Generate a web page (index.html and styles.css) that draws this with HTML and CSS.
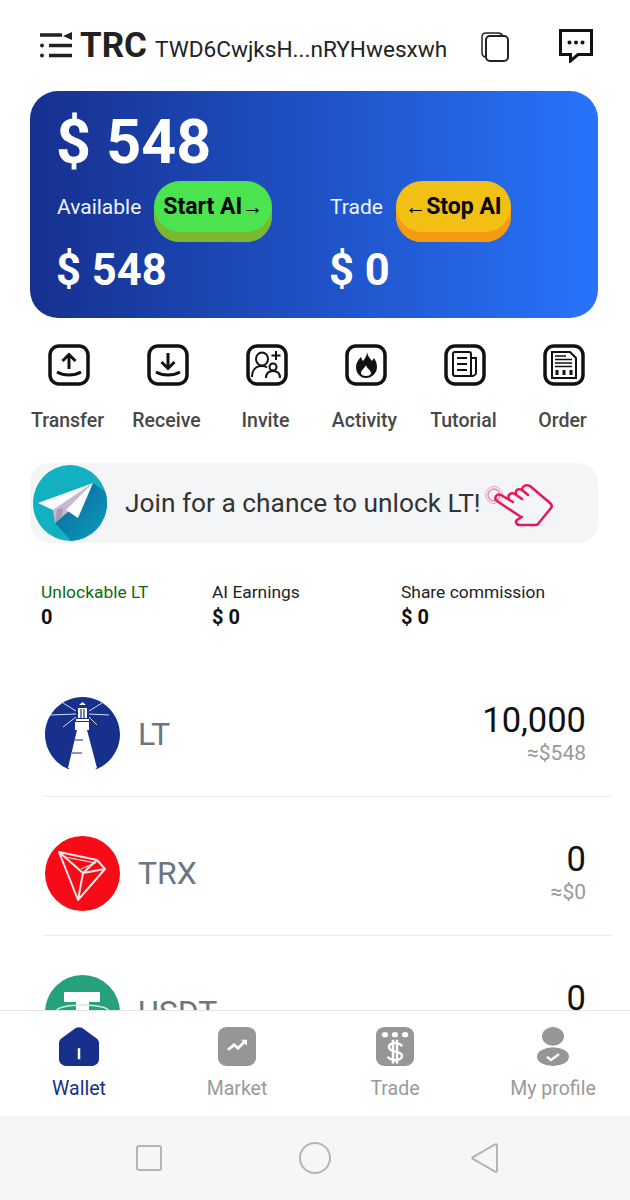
FILE: index.html
```html
<!DOCTYPE html>
<html lang="en">

<head>
    <meta charset="UTF-8">
    <meta name="viewport" content="width=device-width, initial-scale=1.0">
    <title>Wallet</title>
    <link rel="stylesheet" href="styles.css">
</head>

<body>
    <div class="app">
        <div class="scroll">
            <div class="header">
                <svg class="menuIcon" viewBox="0 0 32 26">
                    <path d="M0 3h22M9 13.500h23M9 23.500h23" stroke="#222" stroke-width="3.500" fill="none" />
                    <circle cx="2" cy="13.500" r="2" fill="#222" />
                    <circle cx="2" cy="23.500" r="2" fill="#222" />
                    <path d="M32 0v8l-9-4z" fill="#222" />
                </svg>
                <span class="logoText">TRC</span>
                <span class="address">TWD6CwjksH...nRYHwesxwh</span>
                <svg class="copyIcon" viewBox="0 0 28 30">
                    <rect x="5" y="4" width="22" height="25" rx="4" fill="#fff" stroke="#222" stroke-width="2" />
                    <path d="M4.500 25C2 24.500 1 23 1 21V5c0-2.500 1.500-4 4-4h12c2.500 0 4 1 5 3" fill="none" stroke="#222" stroke-width="1.500" />
                </svg>
                <svg class="msgIcon" viewBox="0 0 34 34">
                    <path d="M1.500 1.500h31v24H19l-7.500 6.500v-6.500h-10z" fill="none" stroke="#111" stroke-width="3" />
                    <circle cx="10.500" cy="13.500" r="2" fill="#111" />
                    <circle cx="17" cy="13.500" r="2" fill="#111" />
                    <circle cx="23.500" cy="13.500" r="2" fill="#111" />
                </svg>
            </div>

            <div class="balance">
                <div class="total">$ 548</div>
                <div class="balanceCols">
                    <div class="balanceCol">
                        <div class="colTop">
                            <span class="colLabel">Available</span>
                            <div class="aiBtn btnStart">Start AI<span class="arrow">→</span></div>
                        </div>
                        <div class="colValue">$ 548</div>
                    </div>
                    <div class="balanceCol">
                        <div class="colTop">
                            <span class="colLabel">Trade</span>
                            <div class="aiBtn btnStop"><span class="arrow">←</span>Stop AI</div>
                        </div>
                        <div class="colValue">$ 0</div>
                    </div>
                </div>
            </div>

            <div class="actions">
                <div class="action">
                    <svg class="actionIcon" viewBox="0 0 42 42">
                        <rect x="2" y="2" width="38" height="38" rx="9" fill="none" stroke="#111" stroke-width="3.500" />
                        <path d="M21 25V11M14.500 17L21 10.500 27.500 17M9 28c7 4 17 4 24 0" fill="none" stroke="#111" stroke-width="3" />
                    </svg>
                    <span>Transfer</span>
                </div>
                <div class="action">
                    <svg class="actionIcon" viewBox="0 0 42 42">
                        <rect x="2" y="2" width="38" height="38" rx="9" fill="none" stroke="#111" stroke-width="3.500" />
                        <path d="M21 9v15M14.500 18L21 24.500 27.500 18M9 28c7 4 17 4 24 0" fill="none" stroke="#111" stroke-width="3" />
                    </svg>
                    <span>Receive</span>
                </div>
                <div class="action">
                    <svg class="actionIcon" viewBox="0 0 42 42">
                        <rect x="2" y="2" width="38" height="38" rx="9" fill="none" stroke="#111" stroke-width="3.500" />
                        <ellipse cx="16" cy="15" rx="6" ry="6.500" fill="none" stroke="#111" stroke-width="2" />
                        <path d="M6 33c0-7 4-11 10-11 2 0 4 .5 5 1.500" fill="none" stroke="#111" stroke-width="2" />
                        <circle cx="27" cy="23" r="3.500" fill="none" stroke="#111" stroke-width="2" />
                        <path d="M20 34c0-5 3-7 7-7s7 2 7 7M30 7v9M25.500 11.500h9" fill="none" stroke="#111" stroke-width="2" />
                    </svg>
                    <span>Invite</span>
                </div>
                <div class="action">
                    <svg class="actionIcon" viewBox="0 0 42 42">
                        <rect x="2" y="2" width="38" height="38" rx="9" fill="none" stroke="#111" stroke-width="3.500" />
                        <path d="M22 8c1 5 3 6 5 9l2-3c2 3 3 6 3 9 0 6-5 11-11 11s-10-5-10-11c0-4 2-7 5-10 1 2 1 3 2 4 2-3 4-5 4-9z" fill="#111" />
                        <path d="M21 21c0 3 5 5 5 8 0 2-2 3-5 3s-5-1-5-3c0-3 4-5 5-8z" fill="#fff" />
                    </svg>
                    <span>Activity</span>
                </div>
                <div class="action">
                    <svg class="actionIcon" viewBox="0 0 42 42">
                        <rect x="2" y="2" width="38" height="38" rx="9" fill="none" stroke="#111" stroke-width="3.500" />
                        <path d="M27 32H11a2 2 0 0 1-2-2V10a2 2 0 0 1 2-2h14a2 2 0 0 1 2 2v22c2 0 5-1 5-3V14h-5" fill="none" stroke="#111" stroke-width="2" />
                        <path d="M13 14h10M13 20h10M13 26h10" stroke="#111" stroke-width="2" />
                    </svg>
                    <span>Tutorial</span>
                </div>
                <div class="action">
                    <svg class="actionIcon" viewBox="0 0 42 42">
                        <rect x="2" y="2" width="38" height="38" rx="9" fill="none" stroke="#111" stroke-width="3.500" />
                        <path d="M9 8h18l6 6v20H9z" fill="none" stroke="#111" stroke-width="2" />
                        <path d="M12 12h11M12 15.500h17M12 19h17M12 22.500h17" stroke="#111" stroke-width="1.500" />
                        <path d="M14 26v5M21 26v5M28 26v5" stroke="#111" stroke-width="3" />
                    </svg>
                    <span>Order</span>
                </div>
            </div>

            <div class="banner">
                <svg class="plane" viewBox="0 0 74 76">
                    <defs>
                        <clipPath id="planeClip">
                            <ellipse cx="37" cy="38" rx="37" ry="38" />
                        </clipPath>
                        <linearGradient id="planeShadow" x1="0.200" y1="0.200" x2="0.900" y2="0.900">
                            <stop offset="0" stop-color="#0a6f9f" />
                            <stop offset="1" stop-color="#0b9fbe" />
                        </linearGradient>
                    </defs>
                    <ellipse cx="37" cy="38" rx="37" ry="38" fill="#12b0c0" />
                    <path d="M60 18L22 58l22 24 36-24 0-26z" fill="url(#planeShadow)" clip-path="url(#planeClip)" />
                    <path d="M60 18L20 45 22 58 35 47z" fill="#c9b8cf" />
                    <path d="M60 18L5 38l15 7z" fill="#fff" />
                    <path d="M60 18L33 45l12 8z" fill="#fff" />
                    <path d="M22 58l2-14 6-1-1 8z" fill="#a99bb5" />
                </svg>
                <span class="bannerText">Join for a chance to unlock LT!</span>
                <svg class="hand" viewBox="0 0 80 60">
                    <circle cx="15" cy="20" r="8.500" fill="none" stroke="#f0a0b8" stroke-width="1" />
                    <circle cx="15" cy="20" r="6" fill="none" stroke="#ef8aa8" stroke-width="1.500" />
                    <path d="M42 42L18 26C14 23 18 18 22 20L34 27M30 24C28 20 32 17 36 19L43 24M37 19C36 15 39 13 43 15L49 20M43 15C43 11 47 9 51 11L71 28C73 30 73 32 72 33L59 49C58 50 57 50 56 50L41 50C37 50 36 46 38 45C39 44 41 43 43 42" fill="none" stroke="#e8185c" stroke-width="2.500" stroke-linejoin="round" stroke-linecap="round" />
                </svg>
            </div>

            <div class="stats">
                <div class="stat statFirst">
                    <div class="statLabel statGreen">Unlockable LT</div>
                    <div class="statValue">0</div>
                </div>
                <div class="stat">
                    <div class="statLabel">AI Earnings</div>
                    <div class="statValue">$ 0</div>
                </div>
                <div class="stat">
                    <div class="statLabel">Share commission</div>
                    <div class="statValue">$ 0</div>
                </div>
            </div>

            <div class="coins">
                <div class="coin">
                    <svg class="coinIcon" viewBox="0 0 75 75">
                        <path d="M23 72C9 66 0 52 0 37.500 0 17 17 0 37.500 0S75 17 75 37.500C75 52 66 66 52 72l-4-2H27z" fill="#16308c" />
                        <path d="M33 11h9v10h-9zM34 8h7l-3.500-3zM30 25h14v8H30zM32 33h10l10 38H23z" fill="#fff" />
                        <path d="M31 22h13v2H31z" fill="#fff" />
                        <path d="M31 14L18 6M31 17L5 18M31 20L18 30M44 14L57 6M44 17l20 1M44 20l8 8" stroke="#d5dcf3" stroke-width="1" />
                        <path d="M36 12v9M39 12v9M30 43h8M27 56h10" stroke="#16308c" stroke-width="1.200" />
                    </svg>
                    <span class="coinName">LT</span>
                    <div class="coinRight">
                        <div class="coinAmount">10,000</div>
                        <div class="coinUsd">≈$548</div>
                    </div>
                </div>
                <div class="coin">
                    <svg class="coinIcon" viewBox="0 0 75 75">
                        <circle cx="37.500" cy="37.500" r="37.500" fill="#f70b16" />
                        <path d="M14 16L52 24 60 33 33 64zM14 16L38 37 33 64M38 37L60 33M38 37L52 24" fill="none" stroke="#f7e6e6" stroke-width="2" stroke-linejoin="round" />
                        <path d="M20 21L50 27 36 33" fill="none" stroke="#f7e6e6" stroke-width="1.200" />
                    </svg>
                    <span class="coinName">TRX</span>
                    <div class="coinRight">
                        <div class="coinAmount">0</div>
                        <div class="coinUsd">≈$0</div>
                    </div>
                </div>
                <div class="coin">
                    <svg class="coinIcon" viewBox="0 0 75 75">
                        <circle cx="37.500" cy="37.500" r="37.500" fill="#26a17b" />
                        <path d="M19 17h36v10H44v35H31V27H19z" fill="#fff" />
                        <ellipse cx="37.500" cy="36" rx="26" ry="6" fill="none" stroke="#cfeee2" stroke-width="1.500" />
                    </svg>
                    <span class="coinName">USDT</span>
                    <div class="coinRight">
                        <div class="coinAmount">0</div>
                        <div class="coinUsd">≈$0</div>
                    </div>
                </div>
            </div>
        </div>

        <div class="tabbar">
            <div class="tab tabActive">
                <svg class="tabIcon" viewBox="0 0 40 46" preserveAspectRatio="none">
                    <path d="M17 1c2-1 4-1 6 0l15 13c1 1 2 3 2 5v19c0 4-3 8-8 8H8c-5 0-8-4-8-8V19c0-2 1-4 2-5z" fill="#16308c" />
                    <path d="M20 25v13" stroke="#fff" stroke-width="2.500" />
                </svg>
                <span>Wallet</span>
            </div>
            <div class="tab">
                <svg class="tabIcon" viewBox="0 0 40 46" preserveAspectRatio="none">
                    <rect x="1" y="0" width="38" height="46" rx="9" fill="#969696" />
                    <path d="M11 27l6-6 4 4 6-7" fill="none" stroke="#fff" stroke-width="3" />
                    <path d="M24 15h6v7z" fill="#fff" />
                </svg>
                <span>Market</span>
            </div>
            <div class="tab">
                <svg class="tabIcon" viewBox="0 0 40 46" preserveAspectRatio="none">
                    <rect x="1" y="0" width="38" height="46" rx="9" fill="#969696" />
                    <circle cx="10" cy="9" r="3.200" fill="#fff" />
                    <circle cx="20" cy="9" r="3.200" fill="#fff" />
                    <circle cx="30" cy="9" r="3.200" fill="#fff" />
                    <path d="M27 23c-1-3-4-4-7-4s-6 1-6 5 4 4 6 5 7 1 7 5-3 5-7 5-6-1-7-4M18 15v28M22 15v28" fill="none" stroke="#fff" stroke-width="2.500" />
                </svg>
                <span>Trade</span>
            </div>
            <div class="tab">
                <svg class="tabIcon" viewBox="0 0 40 46" preserveAspectRatio="none">
                    <ellipse cx="20" cy="11" rx="11" ry="11" fill="#969696" />
                    <ellipse cx="20" cy="35" rx="16" ry="11" fill="#969696" />
                    <path d="M14 35l4 4 8-7" fill="none" stroke="#fff" stroke-width="2.500" />
                </svg>
                <span>My profile</span>
            </div>
        </div>

        <div class="sysNav">
            <svg class="navSquare" viewBox="0 0 26 26">
                <rect x="1" y="1" width="24" height="24" rx="2" fill="none" stroke="#b4b4b4" stroke-width="2" />
            </svg>
            <svg class="navCircle" viewBox="0 0 32 32">
                <circle cx="16" cy="16" r="15" fill="none" stroke="#b4b4b4" stroke-width="2" />
            </svg>
            <svg class="navBack" viewBox="0 0 28 30">
                <path d="M26 2v26c0 1-1 1-2 .500L2 16c-1-.500-1-1.500 0-2L24 1.500c1-.500 2-.500 2 .500z" fill="none" stroke="#b4b4b4" stroke-width="2" />
            </svg>
        </div>
    </div>
</body>

</html>
```

FILE: styles.css
```css
* {
    box-sizing: border-box;
}

body {
    margin: 0;
    font-family: Roboto, "Liberation Sans", sans-serif;
    background-color: white;
}

.app {
    width: 630px;
    height: 1200px;
    display: flex;
    flex-direction: column;
    overflow: hidden;
}

.scroll {
    height: 1010px;
    overflow: hidden;
    padding-top: 20px;
}

/* header */
.header {
    height: 50px;
    display: flex;
    align-items: center;
    padding-left: 40px;
}

.menuIcon {
    width: 32px;
    height: 26px;
    margin-top: -1px;
}

.logoText {
    font-size: 35px;
    font-weight: 700;
    color: #222;
    margin-left: 8px;
    margin-top: 0;
}

.address {
    font-size: 22.6px;
    color: #222;
    margin-left: 8px;
    margin-top: 9px;
}

.copyIcon {
    width: 28px;
    height: 30px;
    margin-left: 34px;
    margin-top: 4px;
}

.msgIcon {
    width: 34px;
    height: 34px;
    margin-left: 50px;
    margin-top: 1px;
}

/* balance card */
.balance {
    height: 227px;
    margin: 21px 32px 0 30px;
    padding: 16px 26px 0;
    border-radius: 28px;
    color: white;
    background: linear-gradient(90deg, #16308f 0%, #2873fb 100%);
}

.total {
    font-size: 61px;
    font-weight: 700;
    line-height: 70px;
}

.balanceCols {
    display: flex;
    margin-top: 4px;
}

.balanceCol {
    width: 273px;
    flex-shrink: 0;
}

.colTop {
    display: flex;
    align-items: flex-start;
}

.colLabel {
    font-size: 21px;
    line-height: 52px;
    color: #f0f3ff;
    margin-left: 1px;
    margin-right: 13px;
}

.aiBtn {
    height: 61px;
    padding: 12px 0 0;
    border-radius: 26px;
    font-size: 23px;
    font-weight: 700;
    line-height: 28px;
    color: black;
    text-align: center;
    white-space: nowrap;
}

.arrow {
    font-size: 21px;
}

.btnStart {
    width: 118px;
    background-color: #4be44f;
    box-shadow: inset 0 -10px 0 #7ab92f;
}

.btnStop {
    width: 115px;
    background-color: #f2c014;
    box-shadow: inset 0 -10px 0 #f59a11;
}

.colValue {
    font-size: 43.5px;
    font-weight: 700;
    line-height: 52px;
    margin-top: 3px;
}

/* actions */
.actions {
    display: grid;
    grid-template-columns: repeat(6, 99px);
    margin: 26px 0 0 18px;
}

.action {
    display: flex;
    flex-direction: column;
    align-items: center;
    font-size: 19.5px;
    font-weight: 500;
    color: #484848;
}

.action span {
    margin-top: 23px;
    line-height: 24px;
}

.actionIcon {
    width: 42px;
    height: 42px;
    margin-left: 2px;
}

/* banner */
.banner {
    height: 80px;
    margin: 30px 32px 0 30px;
    padding-left: 3px;
    display: flex;
    align-items: center;
    background-color: #f4f5f7;
    border-radius: 20px;
}

.plane {
    width: 74px;
    height: 76px;
}

.bannerText {
    font-size: 26.3px;
    color: #333;
    margin-left: 18px;
    white-space: nowrap;
}

.hand {
    width: 80px;
    height: 60px;
    margin-left: -2px;
    margin-top: 4px;
}

/* stats */
.stats {
    display: flex;
    margin-top: 38px;
    padding-left: 41px;
}

.stat {
    width: 189px;
}

.statFirst {
    width: 171px;
}

.statLabel {
    font-size: 17.4px;
    line-height: 22px;
    color: #222;
}

.statGreen {
    color: #0b6a0b;
}

.statValue {
    font-size: 20px;
    font-weight: 700;
    line-height: 26px;
    color: #111;
    margin-top: 1px;
}

/* coin list */
.coins {
    margin: 28px 18px 0 43px;
}

.coin {
    height: 139px;
    display: flex;
    align-items: flex-start;
    padding: 39px 26px 0 2px;
    border-bottom: 1px solid #eeeeee;
}

.coinIcon {
    width: 75px;
    height: 75px;
}

.coinName {
    font-size: 32px;
    color: #6b7680;
    margin-left: 18px;
    margin-top: 18px;
}

.coinRight {
    margin-left: auto;
    text-align: right;
}

.coinAmount {
    font-size: 34.5px;
    line-height: 40px;
    color: #111;
    margin-top: 3px;
}

.coinUsd {
    font-size: 21px;
    line-height: 24px;
    color: #999;
    margin-top: 1px;
}

/* tabs */
.tabbar {
    height: 106px;
    display: grid;
    grid-template-columns: repeat(4, 158px);
    background-color: white;
    border-top: 1px solid #e6e6e6;
    padding-top: 16px;
}

.tab {
    display: flex;
    flex-direction: column;
    align-items: center;
    font-size: 19.5px;
    color: #999;
}

.tab span {
    margin-top: 11px;
    line-height: 24px;
}

.tabActive {
    color: #16308c;
}

.tabIcon {
    width: 40px;
    height: 39px;
}

/* phone nav */
.sysNav {
    height: 84px;
    background-color: #f6f6f6;
    display: flex;
    align-items: center;
    padding-left: 136px;
}

.navSquare {
    width: 26px;
    height: 26px;
}

.navCircle {
    width: 32px;
    height: 32px;
    margin-left: 137px;
}

.navBack {
    width: 28px;
    height: 30px;
    margin-left: 140px;
}
```
